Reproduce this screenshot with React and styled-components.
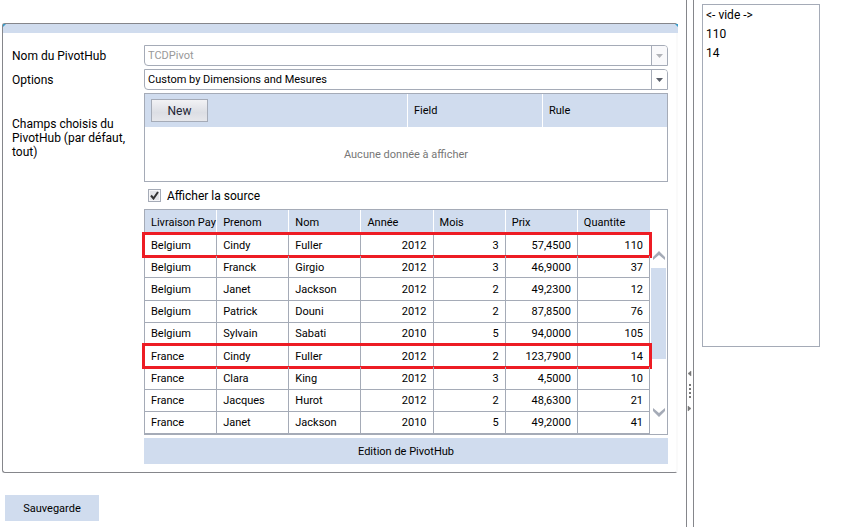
import React, { useState } from "react";
import styled, { createGlobalStyle } from "styled-components";

const columns = [
  { key: "pays", label: "Livraison Pay" },
  { key: "prenom", label: "Prenom" },
  { key: "nom", label: "Nom" },
  { key: "annee", label: "Année", numeric: true },
  { key: "mois", label: "Mois", numeric: true },
  { key: "prix", label: "Prix", numeric: true },
  { key: "quantite", label: "Quantite", numeric: true },
];

const rows = [
  { pays: "Belgium", prenom: "Cindy", nom: "Fuller", annee: "2012", mois: "3", prix: "57,4500", quantite: "110", marked: true },
  { pays: "Belgium", prenom: "Franck", nom: "Girgio", annee: "2012", mois: "3", prix: "46,9000", quantite: "37" },
  { pays: "Belgium", prenom: "Janet", nom: "Jackson", annee: "2012", mois: "2", prix: "49,2300", quantite: "12" },
  { pays: "Belgium", prenom: "Patrick", nom: "Douni", annee: "2012", mois: "2", prix: "87,8500", quantite: "76" },
  { pays: "Belgium", prenom: "Sylvain", nom: "Sabati", annee: "2010", mois: "5", prix: "94,0000", quantite: "105" },
  { pays: "France", prenom: "Cindy", nom: "Fuller", annee: "2012", mois: "2", prix: "123,7900", quantite: "14", marked: true },
  { pays: "France", prenom: "Clara", nom: "King", annee: "2012", mois: "3", prix: "4,5000", quantite: "10" },
  { pays: "France", prenom: "Jacques", nom: "Hurot", annee: "2012", mois: "2", prix: "48,6300", quantite: "21" },
  { pays: "France", prenom: "Janet", nom: "Jackson", annee: "2010", mois: "5", prix: "49,2000", quantite: "41" },
];

function Combo({ id, value, disabled }) {
  return (
    <ComboBox>
      <select id={id} disabled={disabled} defaultValue={value}>
        <option>{value}</option>
      </select>
      <ComboArrow $disabled={disabled}>
        <svg width="7" height="4" viewBox="0 0 7 4">
          <path d="M0 0h7L3.5 4z" fill="currentColor" />
        </svg>
      </ComboArrow>
    </ComboBox>
  );
}

function App() {
  const [showSource, setShowSource] = useState(true);

  return (
    <>
      <GlobalStyle />
      <Page>
        <Main>
          <Panel>
            <PanelBar>
              <svg width="3" height="3" viewBox="0 0 3 3">
                <path d="M0 0h3L0 3z" fill="#3a9cc8" />
              </svg>
              <svg width="3" height="3" viewBox="0 0 3 3">
                <path d="M0 0h3v3z" fill="#3a9cc8" />
              </svg>
            </PanelBar>
            <Form onSubmit={(e) => e.preventDefault()}>
              <label htmlFor="nom">Nom du PivotHub</label>
              <Combo id="nom" value="TCDPivot" disabled />

              <label htmlFor="options">Options</label>
              <Combo id="options" value="Custom by Dimensions and Mesures" />

              <span id="champs">Champs choisis du PivotHub (par défaut, tout)</span>
              <RulesTable aria-labelledby="champs">
                <thead>
                  <tr>
                    <th><NewButton type="button">New</NewButton></th>
                    <th>Field</th>
                    <th>Rule</th>
                  </tr>
                </thead>
                <tbody>
                  <tr>
                    <td colSpan="3">Aucune donnée à afficher</td>
                  </tr>
                </tbody>
              </RulesTable>

              <CheckLine>
                <CheckBox>
                  <input
                    id="source"
                    type="checkbox"
                    checked={showSource}
                    onChange={(e) => setShowSource(e.target.checked)}
                  />
                  {showSource && (
                    <svg width="9" height="9" viewBox="0 0 9 9">
                      <path d="M1 4.5 3.5 7.5 8 1" fill="none" stroke="#333" strokeWidth="2" />
                    </svg>
                  )}
                </CheckBox>
                <label htmlFor="source">Afficher la source</label>
              </CheckLine>

              {showSource && (
                <SourceGrid>
                  <SourceTable>
                    <thead>
                      <tr>
                        {columns.map((col) => <th key={col.key}>{col.label}</th>)}
                      </tr>
                    </thead>
                    <tbody>
                      {rows.map((row, i) => (
                        <SourceRow key={i} $marked={row.marked}>
                          {columns.map((col) => (
                            <SourceCell key={col.key} $numeric={col.numeric}>{row[col.key]}</SourceCell>
                          ))}
                        </SourceRow>
                      ))}
                    </tbody>
                  </SourceTable>
                  <ScrollBar>
                    <ScrollButton type="button" aria-label="Monter">
                      <svg width="12" height="9" viewBox="0 0 12 9">
                        <path d="M0 6 6 0l6 6v3L6 4 0 9z" fill="#a5abb7" />
                      </svg>
                    </ScrollButton>
                    <ScrollThumb />
                    <ScrollButton type="button" aria-label="Descendre">
                      <svg width="12" height="9" viewBox="0 0 12 9">
                        <path d="M0 0l6 5 6-5v3L6 9 0 3z" fill="#a5abb7" />
                      </svg>
                    </ScrollButton>
                  </ScrollBar>
                </SourceGrid>
              )}

              <FlatButton type="button" $wide>Edition de PivotHub</FlatButton>
            </Form>
          </Panel>
          <FlatButton type="button">Sauvegarde</FlatButton>
        </Main>

        <Splitter>
          <svg width="6" height="42" viewBox="0 0 6 42">
            <path d="M4 1v5L1 3.500zM1 36v5l3-2.500z" fill="#777" stroke="#777" strokeWidth="0.5" />
            <path d="M2 14h2v2H2zM2 18h2v2H2zM2 22h2v2H2zM2 26h2v2H2z" fill="#777" />
          </svg>
        </Splitter>

        <Side>
          <ValueList multiple aria-label="Quantite">
            <option>{"<- vide ->"}</option>
            <option>110</option>
            <option>14</option>
          </ValueList>
        </Side>
      </Page>
    </>
  );
}

const GlobalStyle = createGlobalStyle`
  * {
    box-sizing: border-box;
  }
  body {
    margin: 0;
    background: #fff;
    color: #000;
    font: 12px/14px Roboto, "Liberation Sans", sans-serif;
  }
  button, input, select {
    font-family: inherit;
    margin: 0;
  }
  svg {
    display: block;
  }
`;

const Page = styled.div`
  display: flex;
  min-height: 100vh;
`;

const Main = styled.main`
  flex: 1;
  min-width: 0;
  padding: 23px 8px 6px 2px;
  > button {
    margin: 22px 3px 0;
  }
`;

const Panel = styled.section`
  border: 1px solid #85868b;
  border-right: 2px solid #fafafa;
  border-radius: 3px;
`;

const PanelBar = styled.div`
  display: flex;
  justify-content: space-between;
  height: 9px;
  margin-right: -2px;
  background: #d0dcee;
`;

const Form = styled.form`
  display: grid;
  grid-template-columns: 124px 1fr;
  column-gap: 8px;
  row-gap: 3px;
  align-items: center;
  padding: 12px 8px 8px 9px;
`;

const ComboBox = styled.div`
  display: flex;
  height: 21px;
  border: 1px solid #a5abb7;
  border-radius: 0 4px 0 4px;
  overflow: hidden;
  select {
    flex: 1;
    appearance: none;
    border: none;
    outline: none;
    background: transparent;
    padding: 0 3px;
    font-size: 11px;
    color: #000;
    &:disabled {
      color: #999;
      opacity: 1;
    }
  }
`;

const ComboArrow = styled.span`
  display: flex;
  align-items: center;
  justify-content: center;
  width: 16px;
  border-left: 1px solid #a5abb7;
  color: ${(props) => (props.$disabled ? "#b1b3b8" : "#5a5f69")};
  background: ${(props) => (props.$disabled ? "#f9f9fb" : "#fff")};
  pointer-events: none;
`;

const RulesTable = styled.table`
  width: 100%;
  height: 89px;
  table-layout: fixed;
  border: 1px solid #a5abb7;
  border-spacing: 0;
  font-size: 11px;
  th {
    height: 33px;
    padding: 0 6px;
    background: #d0dcee;
    font-weight: normal;
    text-align: left;
    border-right: 1px solid #fff;
  }
  th:nth-child(2) {
    width: 135px;
  }
  th:last-child {
    width: 124px;
    border-right: none;
  }
  td {
    padding: 2px 0 0;
    text-align: center;
    color: #777;
  }
`;

const NewButton = styled.button`
  display: block;
  width: 57px;
  height: 23px;
  padding: 0;
  border: 1px solid #a5abb7;
  background: linear-gradient(#f2f2f5, #dcdee4 60%, #e6e7eb);
  color: #1e2533;
  font-size: 12px;
`;

const CheckLine = styled.div`
  grid-column: 2;
  display: flex;
  align-items: center;
  gap: 6px;
  height: 21px;
  padding-left: 4px;
`;

const CheckBox = styled.span`
  position: relative;
  width: 13px;
  height: 13px;
  input {
    display: block;
    appearance: none;
    width: 13px;
    height: 13px;
    border: 1px solid #a5abb7;
    background: #e3e4e8;
    box-shadow: inset 0 0 0 1px #f6f6f8;
  }
  svg {
    position: absolute;
    top: 2px;
    left: 2px;
    pointer-events: none;
  }
`;

const SourceGrid = styled.div`
  grid-column: 2;
  display: flex;
  border: 1px solid #a5abb7;
`;

const SourceTable = styled.table`
  width: 100%;
  min-width: 0;
  height: 224px;
  table-layout: fixed;
  border-spacing: 0;
  font-size: 11px;
  th {
    height: 24px;
    padding: 2px 0 0 6px;
    background: #d0dcee;
    border-right: 1px solid #fff;
    font-weight: normal;
    text-align: left;
    white-space: nowrap;
  }
  th:last-child {
    border-right: none;
  }
`;

// the red frame hangs on the last cell but is sized by the whole row
const SourceRow = styled.tr`
  position: relative;
  td:last-child::after {
    content: "";
    display: ${(props) => (props.$marked ? "block" : "none")};
    position: absolute;
    inset: -2px -2px -2px -3px;
    border: 3px solid #ed1c24;
    pointer-events: none;
  }
`;

const SourceCell = styled.td`
  padding: 2px 6px 0;
  border-right: 1px solid #a5abb7;
  border-bottom: 1px solid #a5abb7;
  text-align: ${(props) => (props.$numeric ? "right" : "left")};
`;

const ScrollBar = styled.div`
  display: flex;
  flex-direction: column;
  flex: none;
  width: 17px;
  padding: 32px 1px 9px;
`;

const ScrollButton = styled.button`
  display: flex;
  align-items: center;
  justify-content: center;
  height: 26px;
  padding: 0;
  border: none;
  background: none;
  &:last-child {
    margin-top: auto;
  }
`;

const ScrollThumb = styled.div`
  height: 91px;
  background: #d0dcee;
`;

const FlatButton = styled.button`
  grid-column: 2;
  width: ${(props) => (props.$wide ? "100%" : "94px")};
  height: 26px;
  padding: 0;
  border: none;
  background: #d0dcee;
  color: #000;
  font-size: 11px;
`;

const Splitter = styled.div`
  width: 8px;
  padding-top: 370px;
  border: solid #85868b;
  border-width: 0 1px;
`;

const Side = styled.aside`
  width: 150px;
  padding: 4px 24px 4px 8px;
`;

const ValueList = styled.select`
  display: block;
  width: 100%;
  height: 343px;
  padding: 0;
  border: 1px solid #a5abb7;
  border-radius: 0;
  outline: none;
  font-size: 12px;
  overflow: hidden;
  option {
    height: 19px;
    min-height: 19px;
    padding: 3px 3px 2px;
    line-height: 14px;
    color: #000;
  }
`;

export default App;
